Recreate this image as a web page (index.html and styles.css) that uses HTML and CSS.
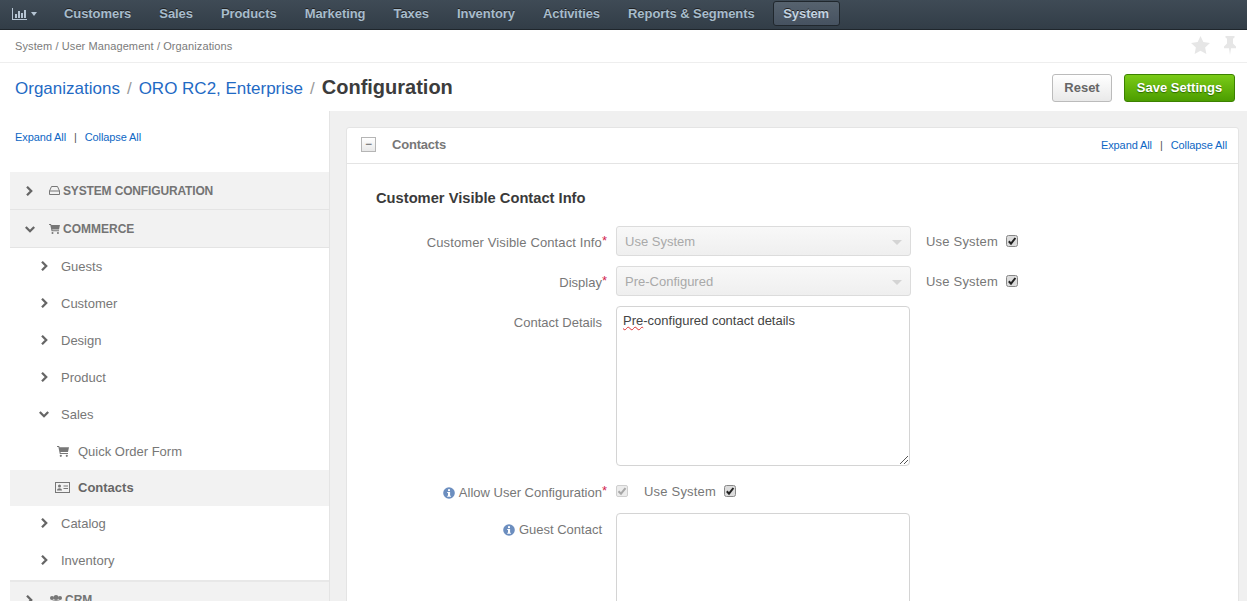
FILE: index.html
```html
<!DOCTYPE html>
<html lang="en">
<head>
<meta charset="utf-8">
<title>Configuration</title>
<link rel="stylesheet" href="styles.css">
</head>
<body>
<svg class="defs" width="0" height="0" aria-hidden="true">
  <symbol id="chev-r" viewBox="0 0 8 10"><path d="M2 .8 6.2 5 2 9.2" fill="none" stroke="currentColor" stroke-width="2.3"/></symbol>
  <symbol id="chev-d" viewBox="0 0 10 8"><path d="M.8 2 5 6.2 9.2 2" fill="none" stroke="currentColor" stroke-width="2.3"/></symbol>
  <symbol id="cart" viewBox="0 0 12 11"><path d="M0 0h2.2l.3 1.2H12l-1 4.8H3.5l.2 1H11v1H2.8L1.4 1H0z" fill="currentColor"/><circle cx="3.8" cy="9.8" r="1.1" fill="currentColor"/><circle cx="9.8" cy="9.8" r="1.1" fill="currentColor"/></symbol>
  <symbol id="info" viewBox="0 0 12 12"><circle cx="6" cy="6" r="5.8" fill="#6c8ebf"/><rect x="5" y="2.2" width="2" height="1.9" fill="#fff"/><path d="M4.2 5h2.9v3.7h.8v1H4.2v-1H5V6H4.2z" fill="#fff"/></symbol>
  <symbol id="check" viewBox="0 0 12 12"><rect x=".5" y=".5" width="11" height="11" rx="2" fill="#dcdcdc" stroke="#888"/><path d="M2.8 6.2 5 8.6 9.400 3" fill="none" stroke="#222" stroke-width="2"/></symbol>
</svg>

<nav class="topnav">
  <span class="nav-dash">
    <svg class="nav-chart" viewBox="0 0 15 12" width="15" height="12"><path d="M0 0h1v11h14v1H0z M3 6h2v4H3z M6 3h2v7H6z M9 5h2v5H9z M12 2h2v8h-2z" fill="currentColor"/></svg>
    <span class="caret"></span>
  </span>
  <a class="nav-item">Customers</a>
  <a class="nav-item">Sales</a>
  <a class="nav-item">Products</a>
  <a class="nav-item">Marketing</a>
  <a class="nav-item">Taxes</a>
  <a class="nav-item">Inventory</a>
  <a class="nav-item">Activities</a>
  <a class="nav-item">Reports &amp; Segments</a>
  <a class="nav-item nav-active">System</a>
</nav>

<div class="crumbs">
  <span>System / User Management / Organizations</span>
  <span class="crumb-icons">
    <svg viewBox="0 0 20 19" width="19" height="18"><path d="M10 0l3 6.400 7 .9-5.100 4.800 1.300 6.900L10 15.600 3.800 19l1.300-6.900L0 7.300l7-.9z" fill="#e6e6e6"/></svg>
    <svg viewBox="0 0 14 19" width="14" height="19"><path d="M2.500 0h9v1.600L10 2.800v4.700l3 3v1.700H8l-1 6.800-1-6.800H1v-1.700l3-3V2.800L2.500 1.600z" fill="#e6e6e6"/></svg>
  </span>
</div>

<header class="titlebar">
  <h1 class="title">
    <a>Organizations</a><span class="sep">/</span><a>ORO RC2, Enterprise</a><span class="sep">/</span><b>Configuration</b>
  </h1>
  <div class="actions">
    <button class="btn">Reset</button>
    <button class="btn btn-save">Save Settings</button>
  </div>
</header>

<div class="layout">
  <aside class="sidebar">
    <div class="links side-links"><a>Expand All</a><i>|</i><a>Collapse All</a></div>
    <div class="group">
      <svg class="chev"><use href="#chev-r"/></svg>
      <svg class="gicon" viewBox="0 0 11 9" width="11" height="9"><path d="M2.500.5h6L10.500 5v3.500H.5V5zM.5 5h10" fill="none" stroke="currentColor"/></svg>
      <span class="tight">SYSTEM CONFIGURATION</span>
    </div>
    <div class="group">
      <svg class="chev-down"><use href="#chev-d"/></svg>
      <svg class="gicon" width="11" height="10"><use href="#cart"/></svg>
      <span>COMMERCE</span>
    </div>
    <div class="item"><svg class="chev"><use href="#chev-r"/></svg>Guests</div>
    <div class="item"><svg class="chev"><use href="#chev-r"/></svg>Customer</div>
    <div class="item"><svg class="chev"><use href="#chev-r"/></svg>Design</div>
    <div class="item"><svg class="chev"><use href="#chev-r"/></svg>Product</div>
    <div class="item"><svg class="chev-down"><use href="#chev-d"/></svg>Sales</div>
    <div class="leaf"><svg class="leaf-icon" width="12" height="11"><use href="#cart"/></svg>Quick Order Form</div>
    <div class="leaf leaf-active">
      <svg class="leaf-icon card-icon" viewBox="0 0 15 11" width="15" height="11"><rect x=".5" y=".5" width="14" height="10" fill="none" stroke="currentColor"/><circle cx="4.500" cy="4" r="1.500" fill="currentColor"/><path d="M2 8.500c0-3 5-3 5 0zM8.500 3.500h4.500v1H8.500zM8.500 6h4.500v1H8.500z" fill="currentColor"/></svg>
      Contacts
    </div>
    <div class="item item-low"><svg class="chev"><use href="#chev-r"/></svg>Catalog</div>
    <div class="item item-low"><svg class="chev"><use href="#chev-r"/></svg>Inventory</div>
    <div class="group group-crm">
      <svg class="chev"><use href="#chev-r"/></svg>
      <svg class="gicon" viewBox="0 0 14 10" width="14" height="10"><circle cx="3" cy="3" r="2" fill="currentColor"/><circle cx="7" cy="2.500" r="2.500" fill="currentColor"/><circle cx="11" cy="3" r="2" fill="currentColor"/><path d="M0 9c0-5 14-5 14 0z" fill="currentColor"/></svg>
      <span>CRM</span>
    </div>
  </aside>

  <main class="main">
    <section class="card">
      <div class="card-head">
        <span class="toggle">&minus;</span>
        <span class="card-title">Contacts</span>
        <div class="links"><a>Expand All</a><i>|</i><a>Collapse All</a></div>
      </div>
      <div class="card-body">
        <h2 class="section-title">Customer Visible Contact Info</h2>

        <div class="row">
          <label class="lbl"><span class="wide">Customer Visible Contact Info</span><em>*</em></label>
          <div class="select"><span>Use System</span><span class="select-caret"></span></div>
          <span class="use">Use System</span><svg class="cb" width="12" height="12"><use href="#check"/></svg>
        </div>
        <div class="row">
          <label class="lbl">Display<em>*</em></label>
          <div class="select"><span>Pre-Configured</span><span class="select-caret"></span></div>
          <span class="use">Use System</span><svg class="cb" width="12" height="12"><use href="#check"/></svg>
        </div>
        <div class="row row-top">
          <label class="lbl lbl-top">Contact Details</label>
          <div class="textarea"><span class="typo">Pre</span>-configured contact details
            <svg class="grip" viewBox="0 0 8 8" width="8" height="8"><path d="M8 0 0 8M8 4 4 8" stroke="#555"/></svg>
          </div>
        </div>
        <div class="row row-allow">
          <label class="lbl"><svg class="info" width="12" height="12"><use href="#info"/></svg>Allow User Configuration<em>*</em></label>
          <span class="cb-off"><svg viewBox="0 0 12 12" width="12" height="12"><path d="M2.500 6.200 5 8.700 9.500 3.200" fill="none" stroke="#a8a8a8" stroke-width="2"/></svg></span>
          <span class="use use-inline">Use System</span><svg class="cb" width="12" height="12"><use href="#check"/></svg>
        </div>
        <div class="row row-top">
          <label class="lbl lbl-top"><svg class="info" width="12" height="12"><use href="#info"/></svg>Guest Contact</label>
          <div class="textarea"></div>
        </div>
      </div>
    </section>
  </main>
</div>
</body>
</html>
```

FILE: styles.css
```css
* { box-sizing: border-box; }
html, body { margin: 0; height: 601px; overflow: hidden; }
body { font-family: "Liberation Sans", Arial, sans-serif; font-size: 13px; color: #777; background: #fff; }
.defs { position: absolute; }
a { color: #0e67c4; }

.topnav { height: 30px; display: flex; align-items: center; background: linear-gradient(#3f4b56, #323d47); border-bottom: 1px solid #1f262c; padding: 0 0 3px 12px; }
.nav-dash { display: flex; align-items: center; width: 52px; color: #b6c5d3; padding-top: 2px; }
.nav-chart { margin-right: 4px; }
.caret { width: 0; height: 0; border: 3.500px solid transparent; border-top: 4px solid #b6c5d3; border-bottom: 0; }
.nav-item { font-size: 13px; font-weight: bold; color: #a7bccc; margin-right: 28px; text-shadow: 0 -1px 0 #222; white-space: nowrap; letter-spacing: -.07px; }
.nav-active { height: 25px; line-height: 23px; width: 67px; text-align: center; margin: 0 0 0 -10px; border: 1px solid #20272d; border-radius: 3px; background: linear-gradient(#56626e, #465260); color: #c3d3e0; }

.crumbs { height: 33px; display: flex; align-items: center; justify-content: space-between; padding: 0 10px 0 15px; border-bottom: 1px solid #eee; font-size: 11px; color: #7b7b7b; letter-spacing: .1px; }
.crumb-icons { display: flex; gap: 13px; align-items: center; padding-bottom: 2px; }

.titlebar { height: 48px; display: flex; align-items: center; justify-content: space-between; padding: 0 12px 0 15px; }
.title { margin: 0; font-size: 17px; font-weight: normal; color: #999; display: flex; align-items: baseline; }
.title a { color: #1f6ac4; }
.sep { margin: 0 7px; }
.title b { font-size: 20px; color: #3c3c3c; }
.actions { display: flex; gap: 12px; margin-top: 1px; }
.btn { height: 28px; width: 60px; font: bold 13px "Liberation Sans", Arial, sans-serif; color: #666; border: 1px solid #bbb; border-radius: 3px; background: linear-gradient(#fff, #e9e9e9); padding: 0; }
.btn-save { width: 111px; color: #fff; border-color: #3c8200; background: linear-gradient(#7acb17, #4c9d00); text-shadow: 0 1px 1px #2e6b00; }

.layout { display: flex; height: 490px; background: #f0f0f0; }
.sidebar { width: 330px; background: #fff; border-right: 1px solid #e4e4e4; padding-left: 10px; flex: none; }
.links { font-size: 11px; white-space: nowrap; letter-spacing: -.1px; }
.links i { font-style: normal; color: #555; margin: 0 8px; }
.side-links { height: 61px; padding: 20px 0 0 5px; }

.group { height: 38px; background: #f2f2f2; border-bottom: 1px solid #e4e4e4; display: flex; align-items: center; font-size: 12px; font-weight: bold; color: #747474; padding-left: 15px; }
.tight { letter-spacing: -.15px; }
.chev { width: 8px; height: 10px; color: #666; flex: none; }
.chev-down { width: 10px; height: 8px; color: #666; flex: none; }
.group .chev { margin-right: 16px; }
.group .chev-down { margin-right: 14px; }
.gicon { color: #777; margin-right: 3px; flex: none; }
.item { height: 37px; display: flex; align-items: center; padding: 0 0 1px 30px; font-size: 13px; color: #777; }
.item .chev { margin-right: 13px; }
.item .chev-down { margin-right: 12px; margin-left: -1px; }
.item-low { padding-bottom: 3px; }
.leaf { height: 37px; display: flex; align-items: center; padding: 0 0 1px 45px; font-size: 13px; color: #777; }
.leaf-icon { color: #777; margin: 0 9px 0 2px; flex: none; }
.card-icon { margin: 0 8px 0 0; }
.leaf-active { height: 36px; background: #f2f2f2; font-weight: bold; color: #666; }
.group-crm { border-top: 2px solid #e8e8e8; height: 40px; padding-bottom: 2px; }
.group-crm .gicon { margin-right: 2px; }

.main { flex: 1; padding: 16px 8px 0 16px; min-width: 0; }
.card { background: #fff; border: 1px solid #e4e4e4; border-radius: 3px 3px 0 0; height: 480px; overflow: hidden; }
.card-head { height: 36px; display: flex; align-items: center; border-bottom: 1px solid #e4e4e4; padding: 0 11px 2px 14px; }
.toggle { width: 15px; height: 15px; border: 1px solid #b5b5b5; background: linear-gradient(#fff, #e8e8e8); font-size: 12px; line-height: 12px; text-align: center; color: #555; margin-right: 16px; }
.card-title { font-size: 13px; font-weight: bold; color: #777; flex: 1; letter-spacing: -.2px; }
.card-body { padding: 25px 0 0 29px; }
.section-title { margin: 0 0 19px; font-size: 14.7px; line-height: 18px; color: #3a3a3a; }

.row { display: flex; align-items: center; height: 30px; margin-bottom: 10px; }
.lbl { width: 240px; text-align: right; padding: 2px 14px 0 0; font-size: 13px; color: #777; flex: none; white-space: nowrap; }
.wide { letter-spacing: .12px; }
.lbl em { color: #d2234f; font-style: normal; position: relative; top: -2px; margin: 0 -5px 0 0; font-size: 13px; }
.select { width: 295px; height: 30px; border: 1px solid #dcdcdc; border-radius: 3px; background: linear-gradient(#f8f8f8, #efefef); display: flex; align-items: center; justify-content: space-between; padding: 0 8px; color: #a9a9a9; font-size: 13px; flex: none; }
.select-caret { width: 0; height: 0; border: 5px solid transparent; border-top: 5px solid #d4d4d4; border-bottom: 0; margin-top: 2px; }
.use { margin-left: 15px; width: 80px; color: #777; font-size: 13px; flex: none; letter-spacing: .2px; }
.cb { flex: none; }
.info { margin-right: 4px; vertical-align: -2px; }
.row-top { align-items: flex-start; height: auto; }
.lbl-top { padding-top: 9px; }
.textarea { position: relative; width: 294px; height: 160px; border: 1px solid #d4d4d4; border-radius: 4px; padding: 6px; font-size: 13px; line-height: 15px; color: #444; background: #fff; flex: none; }
.typo { text-decoration: underline wavy #d33; text-decoration-thickness: 1px; }
.grip { position: absolute; right: 1px; bottom: 1px; }
.row-allow { height: 20px; margin: 15px 0 12px; }
.cb-off { width: 12px; height: 12px; border: 1px solid #cfcfcf; border-radius: 2px; background: #ececec; flex: none; display: flex; }
.cb-off svg { margin: -1px; flex: none; }
.use-inline { margin-left: 16px; }
```
